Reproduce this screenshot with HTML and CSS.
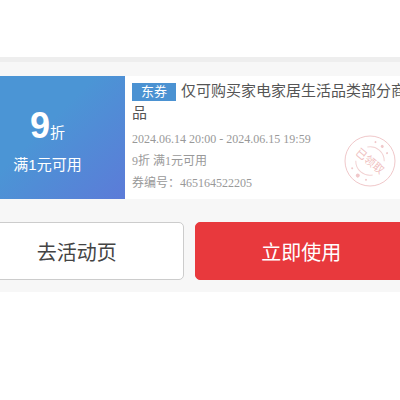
FILE: index.html
```html
<!DOCTYPE html>
<html lang="zh-CN">

<head>
    <meta charset="UTF-8">
    <meta name="viewport" content="width=device-width, initial-scale=1.0">
    <title>优惠券</title>
    <link rel="stylesheet" href="styles.css">
</head>

<body>

    <main class="panel">
        <section class="coupon">
            <div class="coupon-value">
                <div class="discount"><strong>9</strong>折</div>
                <div class="condition">满1元可用</div>
            </div>
            <div class="coupon-info">
                <h1 class="title"><span class="tag">东券</span>仅可购买家电家居生活品类部分商品</h1>
                <p>2024.06.14 20:00 - 2024.06.15 19:59</p>
                <p>9折 满1元可用</p>
                <p>券编号：465164522205</p>

                <!-- 已领取印章 -->
                <svg class="stamp" viewBox="0 0 52 52" role="img" aria-label="已领取">
                    <circle cx="26" cy="26" r="25" fill="none" stroke="#f0c8ca" />
                    <g transform="rotate(40 26 26)">
                        <path d="M15 17a14 14 0 0 1 22 0M15 35a14 14 0 0 0 22 0" fill="none" stroke="#f2d2d3" />
                        <text x="26" y="30" text-anchor="middle">已领取</text>
                        <g fill="#f0c8ca">
                            <circle cx="26" cy="7" r="1.500" />
                            <circle cx="18" cy="8" r="1" />
                            <circle cx="34" cy="9" r="1" />
                            <circle cx="26" cy="45" r="2" />
                            <circle cx="17" cy="43" r="1" />
                            <circle cx="35" cy="43" r="1" />
                        </g>
                    </g>
                </svg>
            </div>
        </section>

        <div class="actions">
            <button class="button" type="button">去活动页</button>
            <button class="button primary" type="button">立即使用</button>
        </div>
    </main>

</body>

</html>
```
FILE: styles.css
```css
body {
    margin: 0;
    padding: 57px 0 0;
    background-color: #fff;
    color: #555;
    font-family: "Liberation Sans", "Noto Sans CJK SC", sans-serif;
}

.panel {
    overflow: hidden;
    padding: 14px 0 12px;
    border-top: 5px solid #eee;
    background-color: #f7f7f7;
}

/* 卡片和按钮略微超出屏幕两侧 */
.coupon,
.actions {
    display: flex;
    margin: 0 -8px 0 -30px;
}

.coupon {
    background-color: #fff;
}

.coupon-value {
    display: flex;
    flex-direction: column;
    justify-content: center;
    gap: 2px;
    width: 155px;
    padding-top: 6px;
    flex-shrink: 0;
    background-image: linear-gradient(135deg, #4b95d5 45%, #5c7bd8);
    color: #fff;
    font-size: 15px;
    text-align: center;
}

.discount {
    line-height: 40px;
}

.discount strong {
    font-size: 36px;
}

.condition {
    line-height: 20px;
}

.coupon-info {
    position: relative;
    flex: 1;
    padding: 4px 0 5px 7px;
}

.title {
    margin: 0 0 4px;
    font-size: 15px;
    font-weight: normal;
    line-height: 22px;
}

.tag {
    display: inline-block;
    width: 44px;
    height: 18px;
    margin-right: 5px;
    background-color: #4b92d2;
    color: #fff;
    font-size: 13px;
    line-height: 18px;
    text-align: center;
}

.coupon-info p {
    margin: 0;
    color: #999;
    font-family: "Liberation Serif", "Noto Sans CJK SC", serif;
    font-size: 12px;
    line-height: 22px;
}

.stamp {
    position: absolute;
    right: 12px;
    bottom: 12px;
    width: 52px;
    height: 52px;
}

.stamp text {
    fill: #efbfc1;
    font-size: 11px;
}

.actions {
    gap: 11px;
    margin-top: 23px;
}

.button {
    flex: 1;
    height: 58px;
    padding: 0;
    border: 1px solid #ccc;
    border-radius: 5px;
    background-color: #fff;
    color: #444;
    font-family: inherit;
    font-size: 20px;
    cursor: pointer;
}

.button.primary {
    border-color: #e8393d;
    background-color: #e8393d;
    color: #fff;
}
```
